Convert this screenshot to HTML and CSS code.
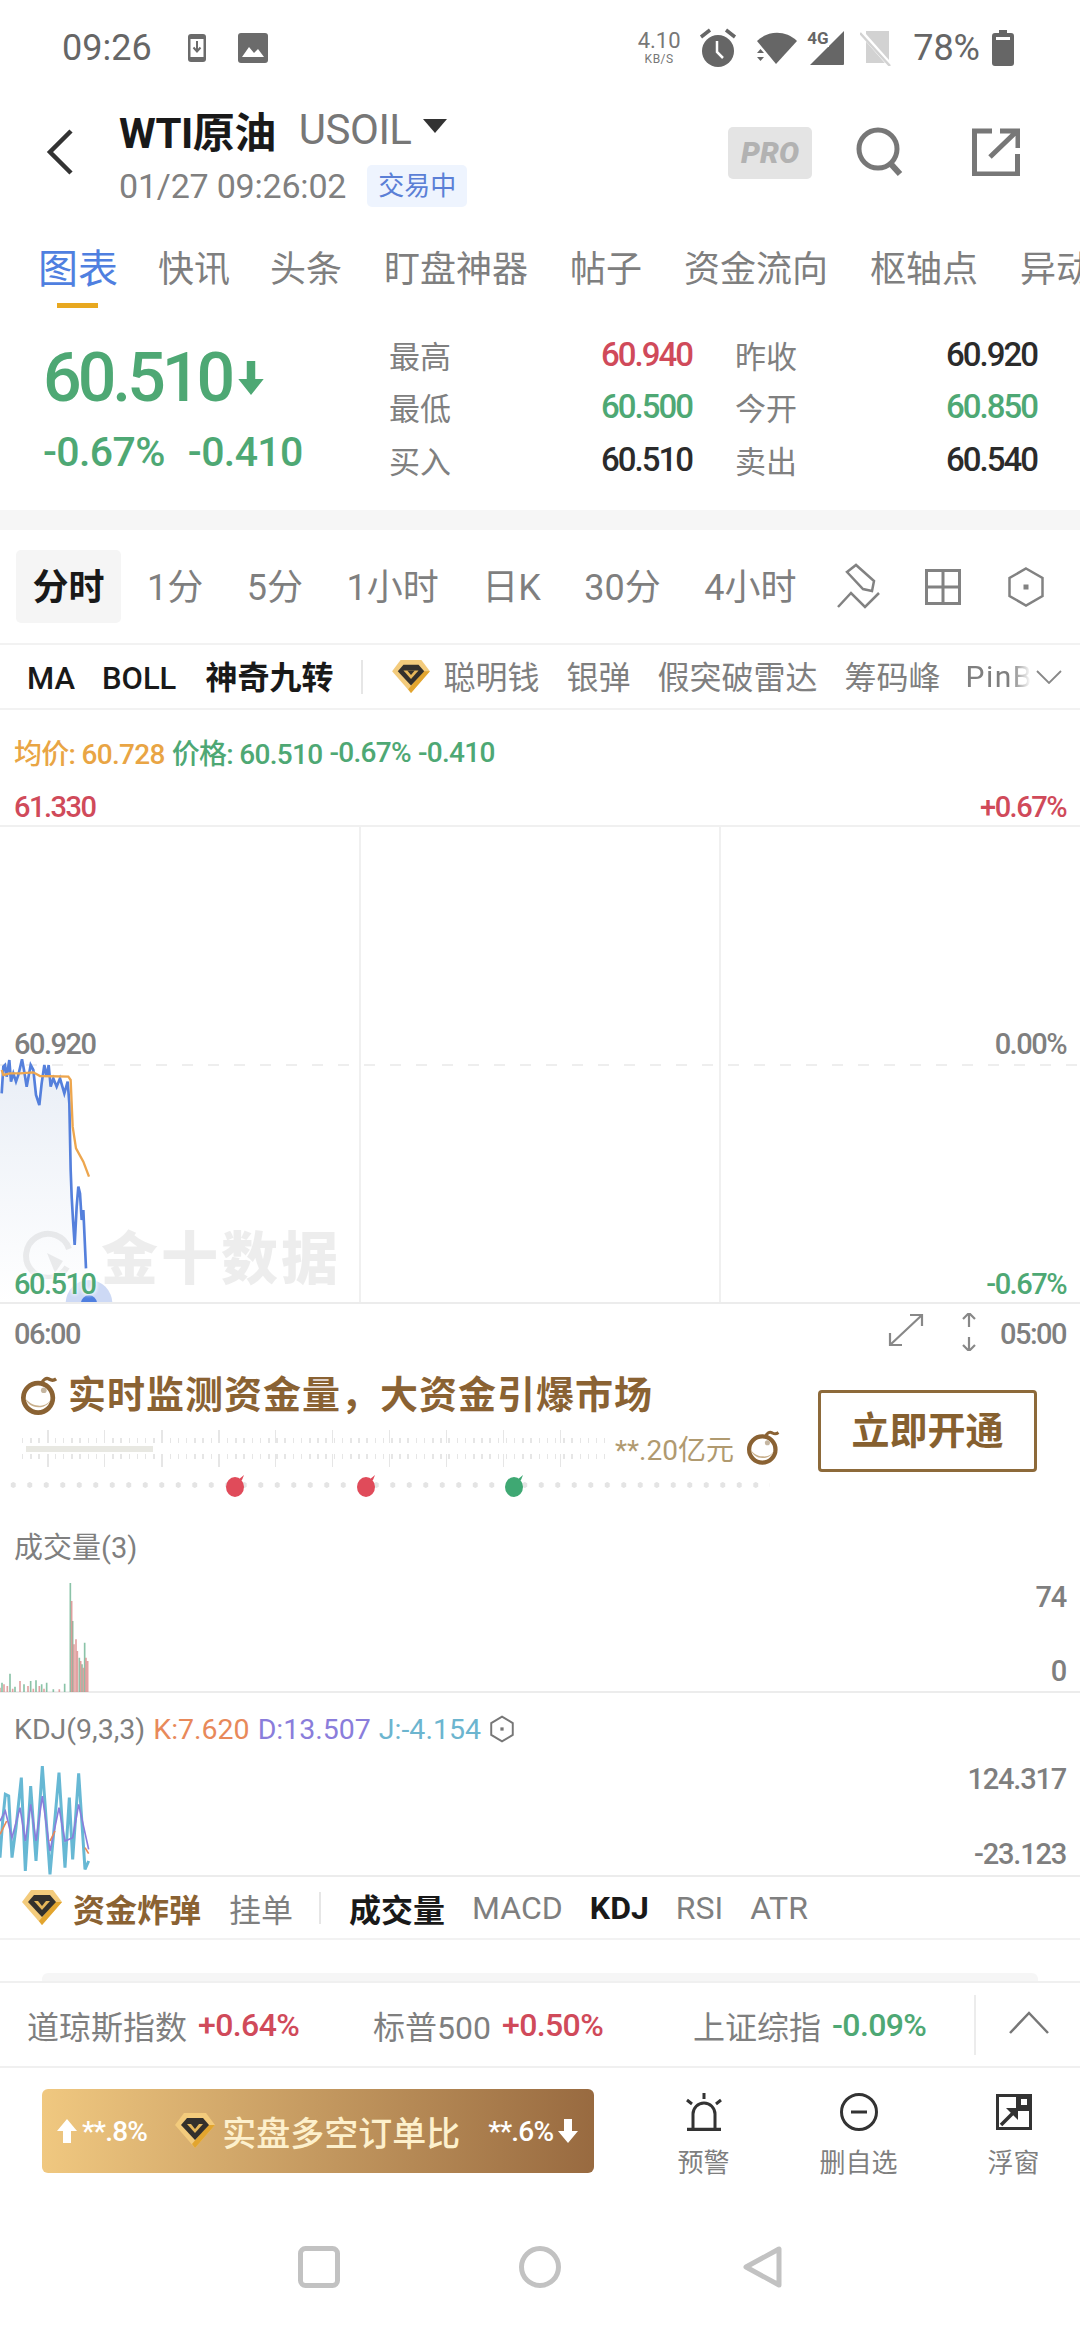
FILE: index.html
```html
<!DOCTYPE html>
<html lang="zh">
<head>
    <meta charset="UTF-8">
    <meta name="viewport" content="width=device-width, initial-scale=1.0">
    <title>WTI原油 USOIL</title>
    <link rel="stylesheet" href="styles.css">
</head>
<body>
    <svg class="defs" width="0" height="0">
        <symbol id="gem" viewBox="0 0 40 36">
            <polygon points="0,12 9,0 31,0 40,12 20,35" fill="#f3cb7c"/>
            <polygon points="40,12 20,35 17,31 33,12" fill="#e2a52f"/>
            <polygon points="6,12 12,5 28,5 34,12 20,27" fill="#33302c"/>
            <polygon points="12,11 28,11 20,20" fill="#e6b75a"/>
            <polygon points="16,11 24,11 20,16" fill="#33302c"/>
        </symbol>
        <symbol id="bomb" viewBox="0 0 40 42">
            <path d="M22 9c1-5 5-6 7-5s4 3 8 0" fill="none" stroke="#8a6233" stroke-width="3.500"/>
            <circle cx="18" cy="24" r="15.500" fill="#fff" stroke="#8a6233" stroke-width="5"/>
            <path d="M4 24c3 8 11 12 20 9 4-1 7-5 8-9-2 6-8 9-14 8-6 0-11-4-14-8z" fill="#c9b08c"/>
            <circle cx="24" cy="16" r="3" fill="#c4b5a0"/>
        </symbol>
        <symbol id="drop" viewBox="0 0 22 24">
            <path d="M13 7l6-5-2 5" fill="currentColor"/>
            <ellipse cx="10" cy="14" rx="9" ry="10" fill="currentColor"/>
        </symbol>
    </svg>

    <!-- 状态栏 -->
    <div class="status">
        <span class="status-time">09:26</span>
        <svg class="st-ic1" width="20" height="30" viewBox="0 0 20 30"><rect x="1" y="1" width="18" height="28" rx="3" fill="#6b6b6b"/><rect x="3.500" y="6" width="13" height="18" fill="#fff"/><path d="M10 8v10M6.500 14.500l3.500 4 3.500-4" fill="none" stroke="#6b6b6b" stroke-width="2"/></svg>
        <svg class="st-ic2" width="30" height="30" viewBox="0 0 30 30"><rect x="0" y="0" width="30" height="30" rx="3" fill="#6b6b6b"/><path d="M4 24l7-10 5 6 4-4 6 8z" fill="#fff"/></svg>
        <div class="status-right">
            <div class="speed"><span class="speed-num">4.10</span><span class="speed-unit">KB/S</span></div>
            <svg class="st-alarm" width="38" height="40" viewBox="0 0 38 40"><circle cx="19" cy="23" r="16" fill="#666"/><path d="M18 13v11l6 6" fill="none" stroke="#fff" stroke-width="2.500"/><path d="M2 9l9-7M36 9l-9-7" stroke="#666" stroke-width="3.500"/></svg>
            <svg class="st-wifi" width="42" height="36" viewBox="0 0 42 36"><path d="M1 11C12 0 30 0 41 11L20 34z" fill="#666"/><path d="M1 23l3.500-4 3.500 4zM1 27l3.500 4 3.500-4z" fill="#666"/><path d="M0 24h9v2H0z" fill="#fff"/></svg>
            <div class="sig">
                <svg width="36" height="36" viewBox="0 0 36 36"><path d="M35 1v33a1 1 0 0 1-1 1H1z" fill="#666"/></svg>
                <span class="sig-text">4G</span>
            </div>
            <svg class="st-sim" width="32" height="36" viewBox="0 0 32 36"><path d="M6 1h23v32H6z" fill="#d2d2d2"/><path d="M0 1l30 34" stroke="#fff" stroke-width="5"/><path d="M0 3l30 33" stroke="#d2d2d2" stroke-width="2.500"/></svg>
            <span class="battery-pct">78%</span>
            <svg class="st-bat" width="22" height="36" viewBox="0 0 22 36"><path d="M7 0h8v3h4a3 3 0 0 1 3 3v27a3 3 0 0 1-3 3H3a3 3 0 0 1-3-3V6a3 3 0 0 1 3-3h4z" fill="#666"/><rect x="4" y="7" width="14" height="3" fill="#fff"/></svg>
        </div>
    </div>

    <!-- 标题 -->
    <header class="head">
        <svg class="back" width="28" height="46" viewBox="0 0 28 46"><path d="M25 2L4 23l21 21" fill="none" stroke="#333" stroke-width="4.500"/></svg>
        <div class="head-main">
            <div class="head-title">
                <span class="title-name">WTI原油</span>
                <span class="title-code">USOIL</span>
                <span class="title-caret"></span>
            </div>
            <div class="head-sub">
                <span class="sub-date">01/27 09:26:02</span>
                <span class="sub-tag">交易中</span>
            </div>
        </div>
        <div class="head-pro">PRO</div>
        <svg class="head-search" width="50" height="50" viewBox="0 0 50 50"><circle cx="23" cy="22" r="19" fill="none" stroke="#777" stroke-width="5"/><path d="M35 36l10 11" stroke="#777" stroke-width="6"/></svg>
        <svg class="head-share" width="48" height="48" viewBox="0 0 48 48"><path d="M20 3H2.500v43h43V26" fill="none" stroke="#777" stroke-width="5"/><path d="M18 29L45 3M28 3h18v17" fill="none" stroke="#777" stroke-width="5"/></svg>
    </header>

    <!-- 顶部标签 -->
    <nav class="tabs">
        <span class="tab tab-on">图表</span>
        <span class="tab tab-near">快讯</span>
        <span class="tab">头条</span>
        <span class="tab">盯盘神器</span>
        <span class="tab">帖子</span>
        <span class="tab">资金流向</span>
        <span class="tab">枢轴点</span>
        <span class="tab">异动</span>
    </nav>

    <!-- 报价 -->
    <section class="quote">
        <div class="quote-left">
            <div class="price green">60.510<svg class="price-arrow" width="26" height="36" viewBox="0 0 24 34"><path d="M8 1h8v17h8L12 33 0 18h8z" fill="#4ea874"/></svg></div>
            <div class="change green"><span>-0.67%</span><span>-0.410</span></div>
        </div>
        <div class="quote-table">
            <div class="cell"><span>最高</span><b class="red">60.940</b></div>
            <div class="cell"><span>昨收</span><b>60.920</b></div>
            <div class="cell"><span>最低</span><b class="green">60.500</b></div>
            <div class="cell"><span>今开</span><b class="green">60.850</b></div>
            <div class="cell"><span>买入</span><b>60.510</b></div>
            <div class="cell"><span>卖出</span><b>60.540</b></div>
        </div>
    </section>
    <div class="band"></div>

    <!-- 周期 -->
    <div class="periods">
        <span class="period-on">分时</span>
        <span class="period">1分</span>
        <span class="period">5分</span>
        <span class="period">1小时</span>
        <span class="period">日K</span>
        <span class="period">30分</span>
        <span class="period">4小时</span>
        <svg class="p-draw" width="50" height="50" viewBox="15 10 50 50"><path d="M28 22l9-7 18 16-2 10-9-2z M19 57l13-14 14 14 14-14" fill="none" stroke="#828282" stroke-width="2.500"/></svg>
        <svg class="p-grid" width="36" height="36" viewBox="0 0 36 36"><path d="M1.500 1.500h33v33h-33zM18 1.500v33M1.500 18h33" fill="none" stroke="#828282" stroke-width="3"/></svg>
        <svg class="p-hex" width="36" height="40" viewBox="0 0 36 40"><path d="M18 1.500l16.500 9.500v18L18 38.500 1.500 29V11z" fill="none" stroke="#828282" stroke-width="2.500"/><rect x="15.500" y="17.500" width="5" height="5" fill="#828282"/></svg>
    </div>

    <!-- 指标 -->
    <div class="indicators">
        <b class="ind-ma">MA</b>
        <b class="ind-boll">BOLL</b>
        <b class="ind-nine">神奇九转</b>
        <i class="ind-sep"></i>
        <svg class="ind-gem" width="38" height="34"><use href="#gem"/></svg>
        <span class="ind-a">聪明钱</span>
        <span class="ind-a">银弹</span>
        <span class="ind-a">假突破雷达</span>
        <span class="ind-a">筹码峰</span>
        <span class="ind-pin">PinB</span>
        <svg class="ind-more" width="26" height="14" viewBox="0 0 26 14"><path d="M1 1l12 12L25 1" fill="none" stroke="#888" stroke-width="1.800"/></svg>
    </div>

    <!-- 分时图 -->
    <div class="legend">
        <span class="orange">均价: 60.728</span>
        <span class="green">价格: 60.510</span>
        <span class="green">-0.67%</span>
        <span class="green">-0.410</span>
    </div>
    <div class="axis-top"><span class="red">61.330</span><span class="red">+0.67%</span></div>
    <div class="chart">
        <svg class="chart-line" width="400" height="283" viewBox="0 0 1200 849">
            <defs><linearGradient id="area" x1="0" y1="0" x2="0" y2="1"><stop offset="0" stop-color="#e9eef6"/><stop offset="1" stop-color="#fff"/></linearGradient></defs>
            <path d="M0 220 5 220 10 140 15 135 20 170 28 120 33 185 40 160 48 185 55 165 66 118 72 150 80 200 92 135 100 150 108 225 118 255 125 190 133 135 140 170 146 135 152 200 160 175 170 200 180 175 193 220 203 185 208 250 212 450 215 530 219 600 224 675 230 560 235 500 240 520 245 600 250 570 258 745 258 849 0 849z" fill="url(#area)"/>
            <path d="M5 220 10 140 15 135 20 170 28 120 33 185 40 160 48 185 55 165 66 118 72 150 80 200 92 135 100 150 108 225 118 255 125 190 133 135 140 170 146 135 152 200 160 175 170 200 180 175 193 220 203 185 208 250 212 450 215 530 219 600 224 675 230 560 235 500 240 520 245 600 250 570 258 745" fill="none" stroke="#5580dc" stroke-width="8"/>
            <path d="M5 150 10 165 30 160 60 160 100 157 120 168 205 170 212 180 218 320 228 385 250 425 267 470" fill="none" stroke="#eda64e" stroke-width="7"/>
            <circle cx="267" cy="850" r="70" fill="#cdd9f5"/>
            <circle cx="267" cy="850" r="24" fill="#4f7fe0"/>
        </svg>
        <div class="watermark">
            <svg width="50" height="50" viewBox="0 0 50 50"><path d="M44 38A22 22 0 1 1 46 20" fill="none" stroke="#000" stroke-opacity=".07" stroke-width="6"/><path d="M24 24l16 8-8 12z" fill="#000" fill-opacity=".07"/></svg>
            <span>金十数据</span>
        </div>
        <span class="y-left y-mid">60.920</span>
        <span class="y-right y-mid">0.00%</span>
        <span class="y-left y-low green halo">60.510</span>
        <span class="y-right y-low green">-0.67%</span>
    </div>
    <div class="time-row">
        <span>06:00</span>
        <svg class="t-exp" width="36" height="34" viewBox="0 0 36 34"><path d="M2 32L34 2M22 2h12v11M2 20v12h12" fill="none" stroke="#888" stroke-width="2.200"/></svg>
        <svg class="t-ver" width="14" height="38" viewBox="0 0 14 38"><path d="M7 0v14M1 6l6-6 6 6M7 24v14M1 32l6 6 6-6" fill="none" stroke="#888" stroke-width="2.200"/></svg>
        <span>05:00</span>
    </div>

    <!-- 资金炸弹横幅 -->
    <section class="promo">
        <div class="promo-main">
            <div class="promo-title">
                <svg width="38" height="42"><use href="#bomb"/></svg>
                <span>实时监测资金量，大资金引爆市场</span>
            </div>
            <div class="promo-meter">
                <div class="ticks"><i class="ticks-fill"></i></div>
                <span class="meter-amount">**.20亿元</span>
                <svg width="34" height="40"><use href="#bomb"/></svg>
            </div>
            <div class="dots">
                <svg class="drop drop-a" width="22" height="24"><use href="#drop"/></svg>
                <svg class="drop drop-b" width="22" height="24"><use href="#drop"/></svg>
                <svg class="drop drop-c" width="22" height="24"><use href="#drop"/></svg>
            </div>
        </div>
        <div class="promo-btn">立即开通</div>
    </section>

    <!-- 成交量 -->
    <section class="pane pane-vol">
        <div class="pane-label">成交量(3)</div>
        <svg class="pane-svg" width="400" height="171" viewBox="0 0 1200 513">
            <path d="M6 513V485M30 513V458M45 513V497M72 513V490M92 513V480M108 513V478M125 513V490M140 513V485M160 513V505M194 513V488M211 513V186M218 513V300M254 513V365M238 513V410M246 513V430" stroke="#6fb593" stroke-width="5" opacity=".8"/>
            <path d="M0 513V500M12 513V490M22 513V495M38 513V503M60 513V480M84 513V495M100 513V503M118 513V495M132 513V503M178 513V505M215 513V240M222 513V370M228 513V355M232 513V390M242 513V420M250 513V440M258 513V410M263 513V420" stroke="#d98484" stroke-width="5" opacity=".75"/>
        </svg>
        <span class="pane-y vol-max">74</span>
        <span class="pane-y vol-min">0</span>
    </section>

    <!-- KDJ -->
    <section class="pane pane-kdj">
        <div class="pane-label kdj-label">
            <span>KDJ(9,3,3)</span>
            <span class="k-k">K:7.620</span>
            <span class="k-d">D:13.507</span>
            <span class="k-j">J:-4.154</span>
            <svg width="26" height="28" viewBox="0 0 24 26"><path d="M12 1.500l10 6v11l-10 6-10-6v-11z" fill="none" stroke="#777" stroke-width="1.800"/><rect x="10.500" y="11.500" width="3" height="3" fill="#777"/></svg>
        </div>
        <svg class="pane-svg" width="400" height="183" viewBox="0 516 1200 549">
            <path d="M0 1010 8 900 16 820 26 825 36 1010 48 920 64 770 76 1050 92 795 108 1020 127 735 150 1060 177 755 195 1040 208 830 218 1015 236 757 255 1045 266 1020" fill="none" stroke="#67b8d4" stroke-width="9"/>
            <path d="M0 900 16 870 36 950 60 860 76 960 92 850 108 960 127 825 150 990 177 860 195 960 218 950 236 850 266 985" fill="none" stroke="#8a7ddb" stroke-width="5"/>
            <path d="M0 940 20 900M150 960 165 930M255 980 266 998" fill="none" stroke="#e98a55" stroke-width="5"/>
        </svg>
        <span class="pane-y kdj-max">124.317</span>
        <span class="pane-y kdj-min">-23.123</span>
    </section>

    <!-- 副图标签 -->
    <div class="subtabs">
        <svg class="sub-gem" width="40" height="36"><use href="#gem"/></svg>
        <b class="sub-bomb">资金炸弹</b>
        <span class="sub-item sub-order">挂单</span>
        <i class="sub-sep"></i>
        <b class="sub-item sub-dark">成交量</b>
        <span class="sub-item">MACD</span>
        <b class="sub-item sub-dark">KDJ</b>
        <span class="sub-item">RSI</span>
        <span class="sub-item">ATR</span>
    </div>
    <div class="peek"><div class="peek-card"></div></div>

    <!-- 指数 -->
    <div class="tickers">
        <div class="ticker"><span>道琼斯指数</span><b class="red">+0.64%</b></div>
        <div class="ticker"><span>标普500</span><b class="red">+0.50%</b></div>
        <div class="ticker"><span>上证综指</span><b class="green">-0.09%</b></div>
        <div class="ticker-end">
            <svg width="40" height="24" viewBox="0 0 40 24"><path d="M1 22L20 2l19 20" fill="none" stroke="#777" stroke-width="2.500"/></svg>
        </div>
    </div>

    <!-- 底部操作 -->
    <div class="actions">
        <div class="order-ratio">
            <svg width="20" height="24" viewBox="0 0 20 24"><path d="M10 0l10 12h-6v12H6V12H0z" fill="#fff"/></svg>
            <span class="ratio-num">**.8%</span>
            <svg class="ratio-gem" width="40" height="36"><use href="#gem"/></svg>
            <span class="ratio-title">实盘多空订单比</span>
            <span class="ratio-num ratio-right">**.6%</span>
            <svg width="20" height="24" viewBox="0 0 20 24"><path d="M10 24L20 12h-6V0H6v12H0z" fill="#fff"/></svg>
        </div>
        <div class="action">
            <svg width="36" height="38" viewBox="0 0 36 38"><path d="M1 36.500h34" stroke="#333" stroke-width="3.500"/><path d="M7 36V21a11 11 0 0 1 22 0v15" fill="none" stroke="#333" stroke-width="3"/><path d="M18 0v6M1 7l5 4M35 7l-5 4" stroke="#333" stroke-width="3"/></svg>
            <span>预警</span>
        </div>
        <div class="action">
            <svg width="38" height="38" viewBox="0 0 38 38"><circle cx="19" cy="19" r="17.500" fill="none" stroke="#333" stroke-width="3"/><path d="M11 19h16" stroke="#333" stroke-width="3"/></svg>
            <span>删自选</span>
        </div>
        <div class="action">
            <svg width="36" height="38" viewBox="0 0 36 38"><path d="M1.500 2.500h33v33h-33z" fill="none" stroke="#333" stroke-width="3"/><path d="M20 3h14v15H20z" fill="#333"/><rect x="25" y="6" width="6" height="6" fill="#fff"/><path d="M5 32L20 17" stroke="#333" stroke-width="3.500"/><path d="M10 15h12v12z" fill="#333"/></svg>
            <span>浮窗</span>
        </div>
    </div>

    <!-- 系统导航 -->
    <div class="sysnav">
        <svg width="42" height="42" viewBox="0 0 42 42"><rect x="2.500" y="2.500" width="37" height="37" rx="5" fill="none" stroke="#c2c2c2" stroke-width="5"/></svg>
        <svg width="42" height="42" viewBox="0 0 42 42"><circle cx="21" cy="21" r="18.500" fill="none" stroke="#c2c2c2" stroke-width="5"/></svg>
        <svg width="42" height="42" viewBox="0 0 42 42"><path d="M39 3v36L6 21z" fill="none" stroke="#c2c2c2" stroke-width="5" stroke-linejoin="round"/></svg>
    </div>
</body>
</html>
```

FILE: styles.css
```css
* {
    box-sizing: border-box;
}
body {
    margin: 0;
    width: 1080px;
    height: 2340px;
    overflow: hidden;
    background-color: #ffffff;
    font-family: Roboto, "Noto Sans CJK SC", sans-serif;
    color: #7f7f7f;
}
b {
    font-weight: 500;
}
i {
    font-style: normal;
}
svg {
    flex: none;
    display: block;
}
.defs {
    position: absolute;
}
.green { color: #4ea874; }
.red { color: #d04a5a; }
.orange { color: #e9a544; }

/* status */
.status {
    height: 90px;
    padding: 6px 66px 0 62px;
    display: flex;
    align-items: center;
    color: #666;
}
.status-time {
    font-size: 36px;
    width: 125px;
}
.st-ic2 {
    margin-left: 31px;
}
.status-right {
    margin-left: auto;
    display: flex;
    align-items: center;
}
.speed {
    display: flex;
    flex-direction: column;
    align-items: center;
    width: 44px;
    color: #777;
}
.speed-num {
    font-size: 22px;
    line-height: 22px;
}
.speed-unit {
    font-size: 12px;
    line-height: 14px;
    letter-spacing: .5px;
}
.st-alarm {
    margin-left: 18px;
}
.st-wifi {
    margin-left: 19px;
}
.sig {
    position: relative;
    margin-left: 11px;
}
.sig-text {
    position: absolute;
    left: -2px;
    top: -1px;
    font-size: 17px;
    font-weight: 700;
    line-height: 18px;
    color: #666;
    background-color: #fff;
}
.st-sim {
    margin-left: 15px;
}
.battery-pct {
    font-size: 36px;
    margin-left: 21px;
}
.st-bat {
    margin-left: 12px;
}

/* header */
.head {
    height: 145px;
    padding: 0 60px 0 46px;
    display: flex;
    align-items: center;
}
.back {
    margin-top: -22px;
    margin-right: 45px;
}
.head-main {
    width: 609px;
    margin-top: -14px;
}
.head-title {
    display: flex;
    align-items: center;
    height: 50px;
}
.title-name {
    font-size: 42px;
    font-weight: 700;
    color: #191919;
    letter-spacing: -.5px;
}
.title-code {
    font-size: 42px;
    color: #777;
    margin-left: 23px;
    letter-spacing: -.5px;
}
.title-caret {
    width: 0;
    height: 0;
    border-left: 12px solid transparent;
    border-right: 12px solid transparent;
    border-top: 14px solid #333;
    margin-left: 12px;
    margin-top: -8px;
}
.head-sub {
    display: flex;
    align-items: center;
    margin-top: 10px;
}
.sub-date {
    font-size: 34px;
    letter-spacing: -.2px;
    color: #808080;
}
.sub-tag {
    margin-left: 21px;
    width: 100px;
    height: 42px;
    border-radius: 5px;
    background-color: #eef4fe;
    color: #5b7fd6;
    font-size: 26px;
    line-height: 42px;
    text-align: center;
}
.head-pro {
    width: 84px;
    height: 52px;
    border-radius: 5px;
    background-color: #e4e4e4;
    color: #b2b2b2;
    font-size: 30px;
    font-weight: 900;
    font-style: italic;
    line-height: 52px;
    text-align: center;
    margin-top: -20px;
}
.head-search {
    margin-left: 43px;
    margin-top: -22px;
}
.head-share {
    margin-left: 67px;
    margin-top: -22px;
}

/* tabs */
.tabs {
    height: 78px;
    padding-left: 38px;
    display: flex;
    gap: 42px;
    overflow: hidden;
    white-space: nowrap;
}
.tab {
    flex: none;
    height: 70px;
    line-height: 70px;
    font-size: 36px;
    color: #7f7f7f;
}
.tab-on {
    position: relative;
    margin-right: -2px;
    font-size: 40px;
    color: #4f7fe0;
}
.tab-near {
    margin-right: -2px;
}
.tab-on::after {
    content: "";
    position: absolute;
    left: 19px;
    bottom: -3px;
    width: 41px;
    height: 5px;
    background-color: #e8a820;
}

/* quote */
.quote {
    height: 197px;
    display: flex;
}
.quote-left {
    width: 389px;
    padding: 27px 0 0 43px;
}
.price {
    display: flex;
    align-items: center;
    height: 76px;
    font-size: 68px;
    font-weight: 500;
    letter-spacing: -4px;
}
.price-arrow {
    margin-left: 7px;
}
.change {
    display: flex;
    gap: 23px;
    margin-top: 14px;
    font-size: 41px;
    line-height: 44px;
    font-weight: 500;
    letter-spacing: -.6px;
}
.quote-table {
    padding-top: 15px;
    display: grid;
    grid-template-columns: 303px 302px;
    grid-auto-rows: 52.5px;
    column-gap: 43px;
}
.cell {
    display: flex;
    justify-content: space-between;
    align-items: center;
    font-size: 31px;
}
.cell span {
    color: #808080;
}
.cell b {
    font-size: 33px;
    letter-spacing: -2px;
    color: #2b2b2b;
}
.cell b.red { color: #d04a5a; }
.cell b.green { color: #4ea874; }
.band {
    height: 20px;
    background-color: #f6f6f6;
}

/* periods */
.periods {
    height: 115px;
    padding-left: 16px;
    display: flex;
    align-items: center;
    border-bottom: 2px solid #f2f2f2;
}
.period-on {
    width: 105px;
    height: 73px;
    margin-right: 26px;
    border-radius: 5px;
    background-color: #f5f5f5;
    color: #191919;
    font-size: 36px;
    font-weight: 700;
    line-height: 76px;
    text-align: center;
}
.period {
    font-size: 36px;
    margin: -5px 43.500px 0 0;
}
.p-draw {
    margin: -4px 0 0 -6px;
}
.p-grid {
    margin-left: 41px;
}
.p-hex {
    margin-left: 47px;
}

/* indicators */
.indicators {
    height: 65px;
    padding-left: 27px;
    display: flex;
    align-items: center;
    border-bottom: 2px solid #f2f2f2;
    white-space: nowrap;
}
.ind-ma, .ind-boll {
    margin-top: 3px;
    font-size: 31px;
    color: #191919;
}
.ind-boll {
    margin-left: 27px;
}
.ind-nine {
    margin: -3px 0 0 29px;
    font-size: 32px;
    font-weight: 700;
    color: #191919;
}
.ind-sep {
    width: 2px;
    height: 34px;
    margin-left: 28px;
    background-color: #e6e6e6;
}
.ind-gem {
    margin-left: 29px;
    margin-right: 13px;
}
.ind-a {
    margin: -4px 27px 0 0;
    font-size: 32px;
}
.ind-pin {
    width: 66px;
    font-size: 30px;
    letter-spacing: 1.500px;
    margin-left: -2px;
    -webkit-mask-image: linear-gradient(90deg, #000 70%, transparent 100%);
    mask-image: linear-gradient(90deg, #000 70%, transparent 100%);
}
.ind-more {
    margin-left: 5px;
}

/* chart */
.legend {
    height: 78px;
    padding: 6px 0 0 14px;
    display: flex;
    align-items: center;
    gap: 7px;
    font-size: 28px;
    font-weight: 500;
    letter-spacing: -.7px;
}
.axis-top {
    height: 37px;
    padding: 0 14px;
    display: flex;
    justify-content: space-between;
    align-items: center;
    font-size: 29px;
    font-weight: 500;
    letter-spacing: -1.500px;
}
.chart {
    position: relative;
    height: 479px;
    overflow: hidden;
    border-top: 2px solid #f0f0f0;
    border-bottom: 2px solid #ececec;
    background:
        linear-gradient(#f0f0f0, #f0f0f0) 359px 0 / 2px 100% no-repeat,
        linear-gradient(#f0f0f0, #f0f0f0) 719px 0 / 2px 100% no-repeat,
        repeating-linear-gradient(90deg, #eeeeee 0 11px, transparent 11px 26px) 0 237px / 100% 2px no-repeat;
}
.chart-line {
    position: absolute;
    left: 0;
    top: 193px;
}
.watermark {
    position: absolute;
    left: 23px;
    top: 386px;
    display: flex;
    align-items: center;
    gap: 28px;
    font-size: 57px;
    font-weight: 900;
    letter-spacing: 3px;
    color: rgba(0, 0, 0, .07);
}
.y-left, .y-right {
    position: absolute;
    font-size: 29px;
    line-height: 32px;
    letter-spacing: -1.500px;
    font-weight: 500;
    color: #7f7f7f;
}
.y-left {
    left: 14px;
}
.y-right {
    right: 14px;
}
.y-left.green, .y-right.green {
    color: #4ea874;
}
.y-mid {
    top: 201px;
}
.y-low {
    top: 441px;
}
.halo {
    text-shadow: 0 0 4px #fff, 0 0 4px #fff;
}
.time-row {
    height: 57px;
    padding: 2px 14px 0;
    display: flex;
    align-items: center;
    font-size: 29px;
    font-weight: 500;
    letter-spacing: -1.500px;
}
.t-exp {
    margin: -8px 0 0 auto;
}
.t-ver {
    margin: -4px 24px 0 38px;
}

/* promo */
.promo {
    height: 160px;
    display: flex;
}
.promo-main {
    width: 818px;
    padding-top: 13px;
}
.promo-title {
    display: flex;
    align-items: center;
    height: 42px;
    padding-left: 21px;
    gap: 9px;
    color: #8a6233;
    font-size: 38px;
    font-weight: 700;
    letter-spacing: 1px;
}
.promo-title span {
    margin-top: -7px;
}
.promo-meter {
    display: flex;
    align-items: center;
    height: 40px;
    margin: 12px 0 0 22px;
}
.ticks {
    position: relative;
    width: 583px;
    height: 37px;
    background:
        repeating-linear-gradient(90deg, #e6e6e6 0 1.500px, transparent 1.500px 8.200px) 0 8px / 100% 5px no-repeat,
        repeating-linear-gradient(90deg, #e6e6e6 0 1.500px, transparent 1.500px 8.200px) 0 24px / 100% 5px no-repeat,
        repeating-linear-gradient(90deg, transparent 0 25px, #e6e6e6 25px 26.500px, transparent 26.500px 57px) 0 0 / 100% 13px no-repeat,
        repeating-linear-gradient(90deg, transparent 0 25px, #e6e6e6 25px 26.500px, transparent 26.500px 57px) 0 24px / 100% 13px no-repeat;
}
.ticks-fill {
    position: absolute;
    left: 4px;
    top: 16px;
    width: 127px;
    height: 6px;
    background-color: #e8e8e2;
}
.meter-amount {
    margin-left: 10px;
    width: 122px;
    font-size: 28px;
    color: #b09a70;
}
.promo-meter svg {
    margin-left: 10px;
    margin-top: -2px;
}
.dots {
    position: relative;
    width: 765px;
    height: 24px;
    margin: 5px 0 0 5px;
    background: radial-gradient(circle, #e4e4e4 2.500px, transparent 3px) 0 center / 16.500px 12px repeat-x;
}
.drop {
    position: absolute;
    top: 0;
}
.drop-a { left: 220px; color: #e04b5a; }
.drop-b { left: 351px; color: #e04b5a; }
.drop-c { left: 499px; color: #3fa873; }
.promo-btn {
    width: 219px;
    height: 82px;
    margin-top: 29px;
    border: 3px solid #8d6a3a;
    border-radius: 4px;
    color: #86602f;
    font-size: 38px;
    font-weight: 700;
    line-height: 76px;
    text-align: center;
}

/* sub panes */
.pane {
    position: relative;
    border-bottom: 2px solid #ececec;
}
.pane-vol {
    height: 172px;
}
.pane-kdj {
    height: 184px;
}
.pane-label {
    height: 47px;
    padding-left: 14px;
    display: flex;
    align-items: center;
    font-size: 29px;
    color: #7f7f7f;
}
.kdj-label {
    gap: 8px;
    height: 72px;
    font-size: 28.500px;
}
.k-k { color: #e8895a; }
.k-d { color: #8a7ddb; }
.k-j { color: #6cb5cf; }
.pane-svg {
    position: absolute;
    left: 0;
    top: 0;
}
.pane-y {
    position: absolute;
    right: 14px;
    font-size: 29px;
    line-height: 32px;
    font-weight: 500;
    letter-spacing: -1.200px;
}
.vol-max { top: 60px; }
.vol-min { top: 134px; }
.kdj-max { top: 70px; }
.kdj-min { top: 145px; }

/* sub tabs */
.subtabs {
    height: 63px;
    padding-left: 22px;
    display: flex;
    align-items: center;
    border-bottom: 2px solid #f2f2f2;
    white-space: nowrap;
}
.sub-bomb {
    margin-left: 11px;
    font-size: 32px;
    font-weight: 700;
    color: #8a6233;
}
.sub-item {
    margin-right: 27px;
    font-size: 32px;
}
.sub-order {
    margin: 0 0 0 28px;
}
.sub-sep {
    width: 2px;
    height: 32px;
    margin: 0 28px 0 26px;
    background-color: #e6e6e6;
}
.sub-dark {
    color: #191919;
    font-weight: 700;
}
.peek {
    height: 43px;
    padding: 33px 42px 0;
    border-bottom: 2px solid #f0f0f0;
}
.peek-card {
    height: 8px;
    border-radius: 6px 6px 0 0;
    background-color: #f6f6f6;
}

/* tickers */
.tickers {
    height: 85px;
    padding-left: 27px;
    display: grid;
    grid-template-columns: 346px 320px 281px 1fr;
    align-items: center;
    border-bottom: 2px solid #f0f0f0;
}
.ticker {
    display: flex;
    align-items: center;
    gap: 11px;
    font-size: 32px;
}
.ticker b {
    font-size: 32px;
    letter-spacing: -.6px;
}
.ticker-end {
    height: 60px;
    padding: 0 0 4px 33px;
    display: flex;
    align-items: center;
    border-left: 2px solid #ececec;
}

/* actions */
.actions {
    height: 123px;
    padding: 21px 0 0 42px;
    display: flex;
    align-items: flex-start;
}
.order-ratio {
    flex: none;
    width: 552px;
    height: 84px;
    margin-right: 32px;
    padding: 0 15px 0 15px;
    display: flex;
    align-items: center;
    border-radius: 6px;
    background: linear-gradient(90deg, #f0c880, #986a40);
    color: #fff;
}
.ratio-num {
    margin-left: 5px;
    font-size: 28px;
    font-weight: 500;
    letter-spacing: -.8px;
}
.ratio-gem {
    margin: 0 7px 0 28px;
}
.ratio-title {
    width: 266px;
    font-size: 34px;
    font-weight: 500;
    color: #fdf0cc;
}
.ratio-right {
    margin: 0 5px 0 0;
}
.action {
    flex: none;
    width: 155px;
    display: flex;
    flex-direction: column;
    align-items: center;
    margin-top: 4px;
    font-size: 26px;
}
.action span {
    margin-top: 15px;
    line-height: 34px;
}

/* system nav */
.sysnav {
    height: 150px;
    padding-top: 55px;
    display: flex;
    justify-content: center;
    gap: 179px;
}
```
